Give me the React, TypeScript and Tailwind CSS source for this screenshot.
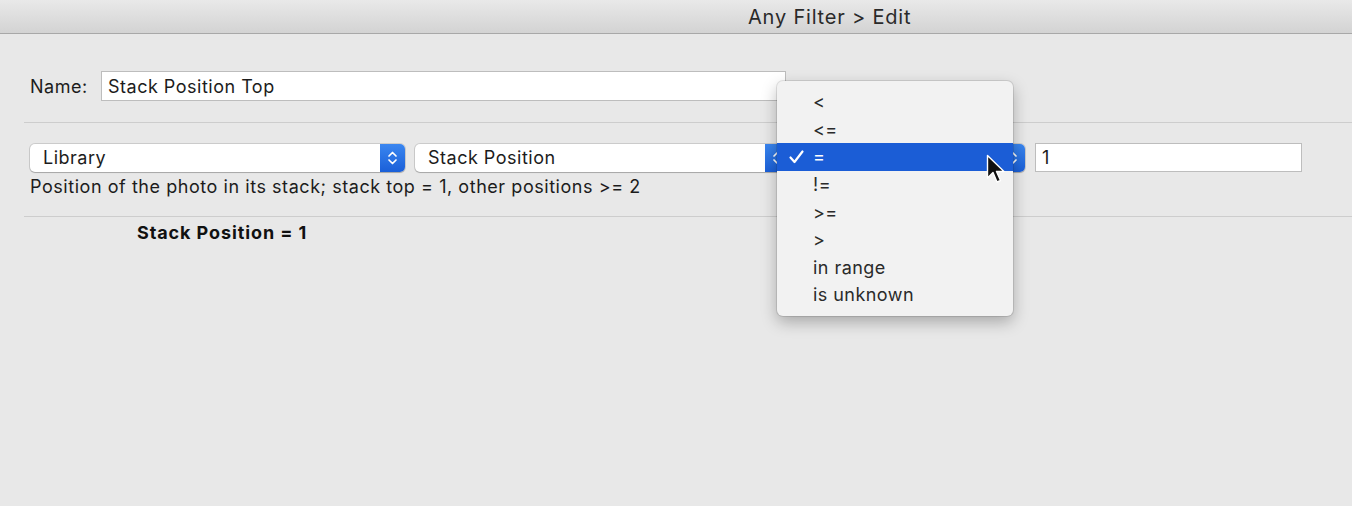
import React from 'react';

const ops = ['<', '<=', '=', '!=', '>=', '>', 'in range', 'is unknown'];

const Chevrons: React.FC = () => (
  <svg width="11" height="18" viewBox="0 0 11 18" fill="none" stroke="white" strokeWidth="1.7" strokeLinecap="round" strokeLinejoin="round">
    <path d="M2 7 L5.5 3.5 L9 7" />
    <path d="M2 11 L5.5 14.5 L9 11" />
  </svg>
);

const Popup: React.FC<{ label: string; width: string }> = ({ label, width }) => (
  <div className={`${width} h-[28px] flex items-stretch rounded-[5px] bg-white shadow-[0_0_0_1px_rgba(0,0,0,0.12),0_1px_1px_rgba(0,0,0,0.18)] overflow-hidden`}>
    <div className="flex-1 flex items-center pl-[13px] text-[18px] tracking-[0.5px] text-[#1c1c1c]">{label}</div>
    <div className="w-[25px] flex items-center justify-center bg-gradient-to-b from-[#3a86f0] to-[#1a5fd8]">
      <Chevrons />
    </div>
  </div>
);

const App: React.FC = () => {
  return (
    <div className="relative w-[1352px] h-[506px] overflow-hidden bg-[#e8e8e8] font-['Inter','Liberation_Sans',sans-serif] text-[#1c1c1c]">
      {/* title bar */}
      <div className="h-[34px] bg-gradient-to-b from-[#e9e9e9] to-[#d3d3d3] border-b border-[#a8a8a8] flex items-center pl-[748px] pt-[1px] text-[20px] tracking-[0.8px] text-[#2a2a2a]">
        Any Filter &gt; Edit
      </div>

      {/* name row */}
      <div className="mt-[37px] flex items-center pl-[30px]">
        <span className="w-[71px] text-[18px] tracking-[0.5px]">Name:</span>
        <div className="w-[685px] h-[30px] bg-white border border-[#bdbdbd] flex items-center pl-[6px] text-[18px] tracking-[0.5px]">
          Stack Position Top
        </div>
      </div>

      <div className="mt-[21px] ml-[24px] h-px bg-[#cdcdcd]" />

      {/* criteria row */}
      <div className="mt-[20px] pl-[30px] flex items-center gap-[10px]">
        <Popup label="Library" width="w-[375px]" />
        <Popup label="Stack Position" width="w-[375px]" />
        <Popup label="=" width="w-[225px]" />
        <div className="w-[267px] h-[29px] bg-white border border-[#bdbdbd] flex items-center pl-[6px] text-[18px]">1</div>
      </div>

      <div className="mt-[4px] pl-[30px] h-[20px] flex items-center text-[18px] tracking-[0.55px]">
        Position of the photo in its stack; stack top = 1, other positions &gt;= 2
      </div>

      <div className="mt-[20px] ml-[24px] h-px bg-[#cdcdcd]" />

      <div className="mt-[5px] pl-[137px] h-[20px] flex items-center text-[18px] tracking-[0.9px] font-bold text-[#111]">
        Stack Position = 1
      </div>

      {/* open popup menu */}
      <div className="absolute left-[777px] top-[81px] w-[236px] py-[7px] rounded-[6px] bg-[#f2f2f2] shadow-[0_0_0_1px_rgba(0,0,0,0.1),0_6px_16px_rgba(0,0,0,0.28)]">
        {ops.map((op) => {
          const sel = op === '=';
          return (
            <div
              key={op}
              className={`h-[27.6px] flex items-center text-[18px] tracking-[0.45px] ${sel ? 'bg-[#1b5dd6] text-white' : 'text-[#2a2a2a]'}`}
            >
              <span className="w-[36px] flex justify-end pr-[9px]">
                {sel && (
                  <svg width="15" height="14" viewBox="0 0 15 14" fill="none" stroke="white" strokeWidth="2.2" strokeLinecap="round" strokeLinejoin="round">
                    <path d="M1.5 7.5 L5.5 12 L13.5 1.5" />
                  </svg>
                )}
              </span>
              <span>{op}</span>
            </div>
          );
        })}
      </div>

      {/* mouse cursor */}
      <svg className="absolute left-[986px] top-[154px]" width="20" height="32" viewBox="0 0 20 32">
        <path d="M1.5 1.5 L1.5 24 L7 18.5 L11 28 L14.5 26.5 L10.5 17.5 L18 17.5 Z" fill="#111" stroke="white" strokeWidth="1.4" strokeLinejoin="round" />
      </svg>
    </div>
  );
};

export default App;
